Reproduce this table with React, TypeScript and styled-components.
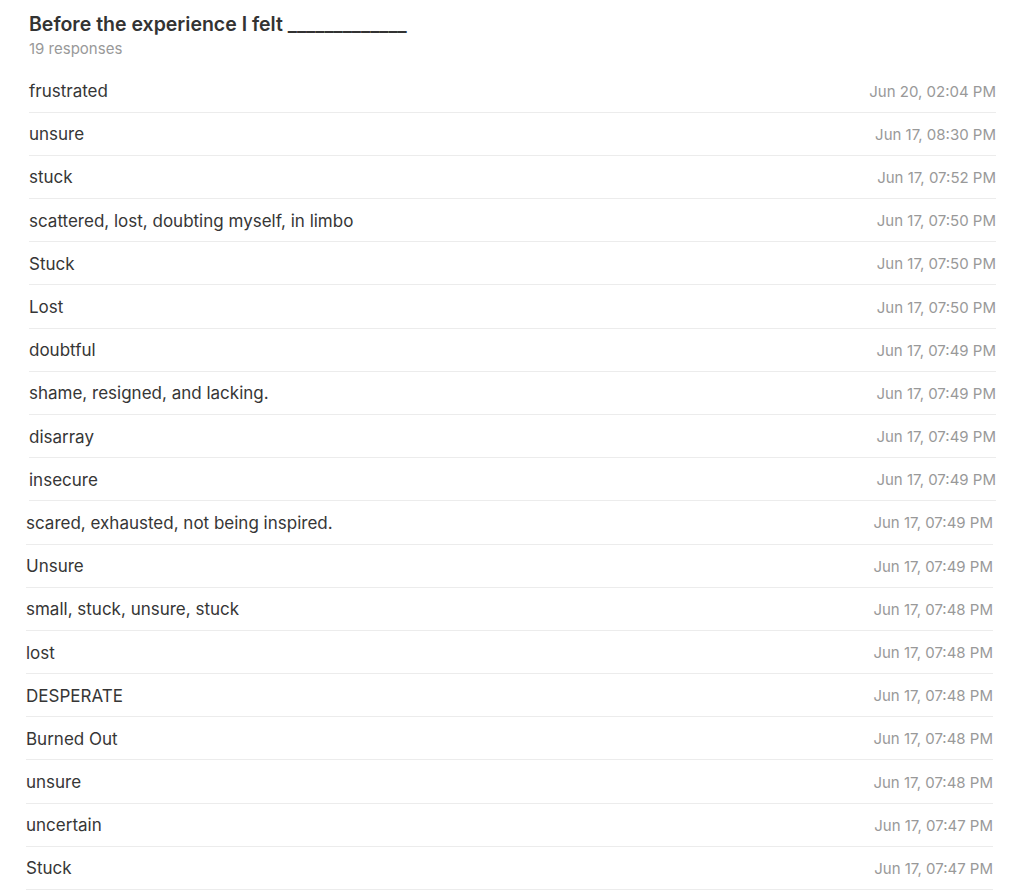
import React from "react";
import styled, { createGlobalStyle } from "styled-components";

const Global = createGlobalStyle`
  html, body { margin: 0; padding: 0; background: #ffffff; }
  body { font-family: Inter, "Noto Sans", sans-serif; color: #333333; }
`;

const Page = styled.div`
  padding: 12.9px 30px 0 29px;
  box-sizing: border-box;
  width: 1026px;
`;

const Header = styled.div`
  display: flex;
  flex-direction: column;
  gap: 5.1px;
  height: 56.6px;
`;

const Title = styled.h1`
  margin: 0;
  font-size: 19.5px;
  line-height: 22px;
  font-weight: 600;
  color: #333333;
`;

const Sub = styled.div`
  font-size: 15px;
  line-height: 18px;
  color: #999999;
`;

const Group = styled.div<{ $shift: number }>`
  display: flex;
  flex-direction: column;
  margin-left: ${(p) => -p.$shift}px;
  margin-right: ${(p) => p.$shift}px;
`;

const Row = styled.div`
  display: flex;
  align-items: center;
  justify-content: space-between;
  height: 42.2px;
  border-bottom: 1px solid #ececec;
`;

const Answer = styled.span`
  font-size: 17px;
  color: #363636;
  padding-top: 1px;
`;

const Stamp = styled.span`
  font-size: 15px;
  color: #999999;
  padding-top: 1px;
`;

type Item = [string, string];

const first: Item[] = [
  ["frustrated", "Jun 20, 02:04 PM"],
  ["unsure", "Jun 17, 08:30 PM"],
  ["stuck", "Jun 17, 07:52 PM"],
  ["scattered, lost, doubting myself, in limbo", "Jun 17, 07:50 PM"],
  ["Stuck", "Jun 17, 07:50 PM"],
  ["Lost", "Jun 17, 07:50 PM"],
  ["doubtful", "Jun 17, 07:49 PM"],
  ["shame, resigned, and lacking.", "Jun 17, 07:49 PM"],
  ["disarray", "Jun 17, 07:49 PM"],
  ["insecure", "Jun 17, 07:49 PM"],
];

const second: Item[] = [
  ["scared, exhausted, not being inspired.", "Jun 17, 07:49 PM"],
  ["Unsure", "Jun 17, 07:49 PM"],
  ["small, stuck, unsure, stuck", "Jun 17, 07:48 PM"],
  ["lost", "Jun 17, 07:48 PM"],
  ["DESPERATE", "Jun 17, 07:48 PM"],
  ["Burned Out", "Jun 17, 07:48 PM"],
  ["unsure", "Jun 17, 07:48 PM"],
  ["uncertain", "Jun 17, 07:47 PM"],
  ["Stuck", "Jun 17, 07:47 PM"],
];

export default function App() {
  return (
    <>
      <Global />
      <Page>
        <Header>
          <Title>Before the experience I felt _____________</Title>
          <Sub>19 responses</Sub>
        </Header>
        <Group $shift={0}>
          {first.map(([a, d], i) => (
            <Row key={i}>
              <Answer>{a}</Answer>
              <Stamp>{d}</Stamp>
            </Row>
          ))}
        </Group>
        <Group $shift={3}>
          {second.map(([a, d], i) => (
            <Row key={i}>
              <Answer>{a}</Answer>
              <Stamp>{d}</Stamp>
            </Row>
          ))}
        </Group>
      </Page>
    </>
  );
}
